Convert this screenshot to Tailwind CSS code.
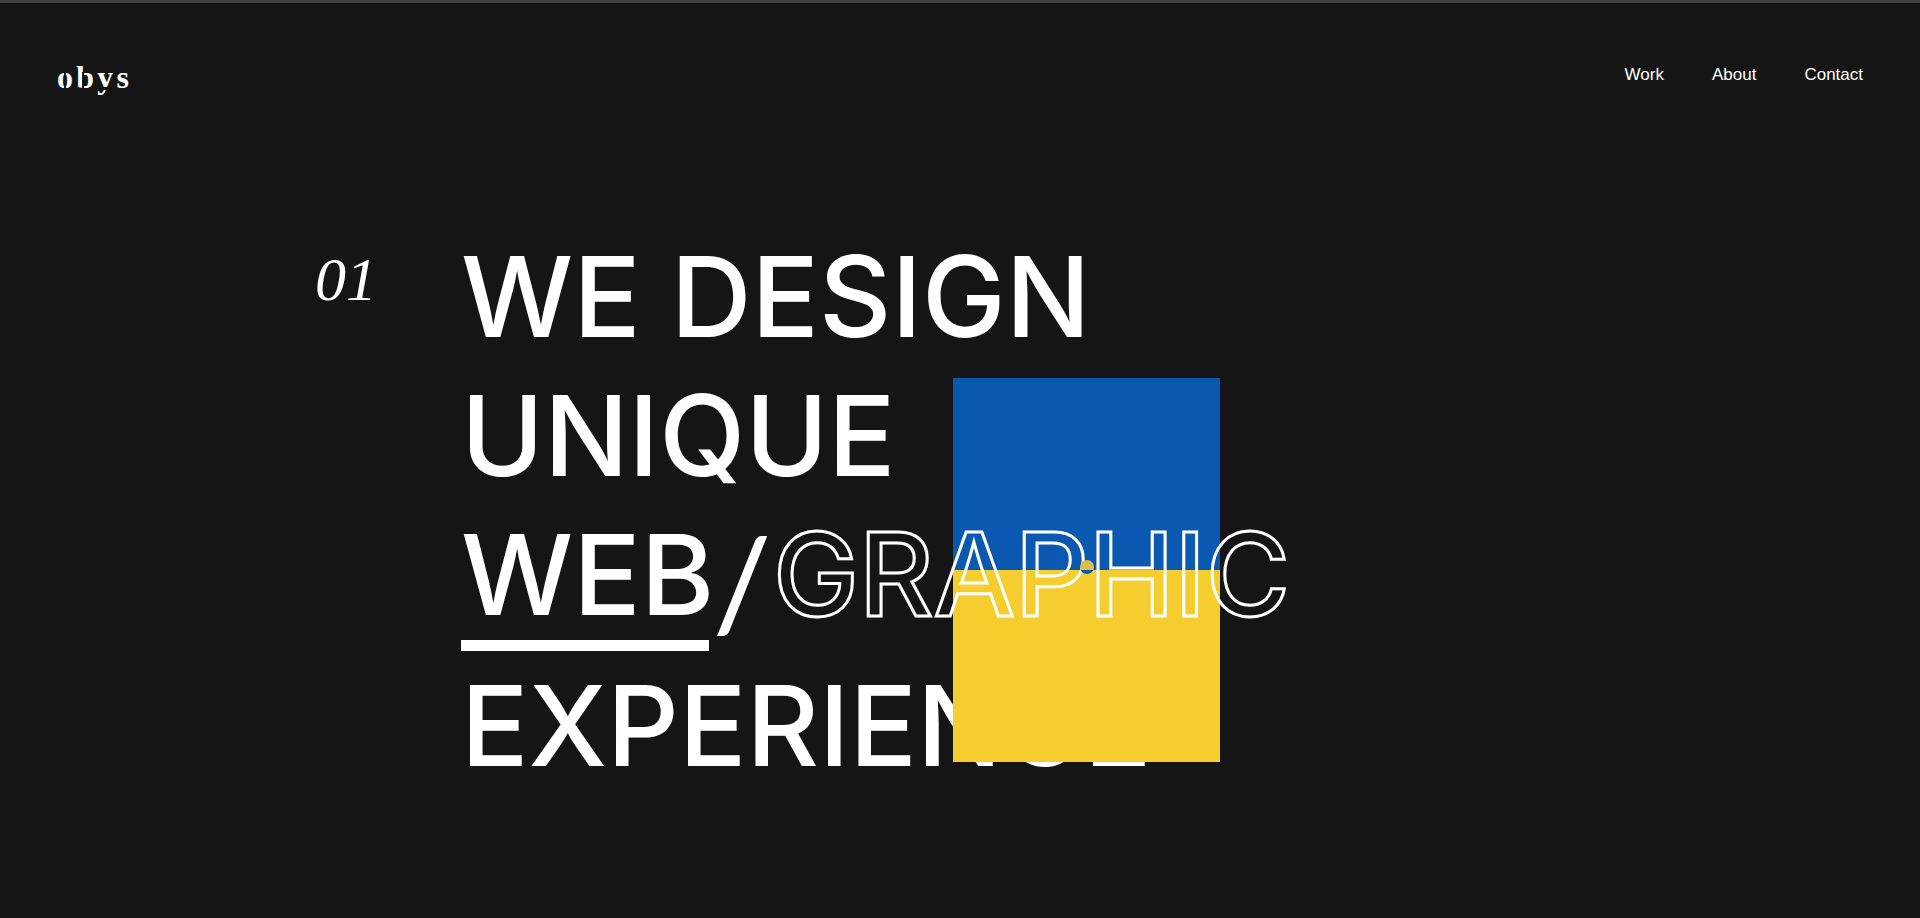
<!DOCTYPE html>
<html lang="en">
<head>
<meta charset="utf-8">
<meta name="viewport" content="width=device-width, initial-scale=1">
<title>Obys</title>
<script src="https://cdn.jsdelivr.net/npm/@tailwindcss/browser@4"></script>
</head>
<body class="min-h-screen overflow-x-hidden border-t-[3px] border-[#404040] bg-[#151515] font-['Inter',sans-serif] text-white">
  <header class="flex items-start justify-between px-[57px] pt-14">
    <a href="#" class="relative block font-['Liberation_Serif',serif] text-[32px] leading-9 font-bold tracking-widest">
      obys
      <!-- slits that give the wordmark its stencil cut -->
      <span class="absolute top-[13px] left-[7px] h-[18px] w-[2px] bg-[#151515]"></span>
      <span class="absolute top-[13px] left-[25px] h-[18px] w-[2px] bg-[#151515]"></span>
      <span class="absolute top-[28px] left-[38px] h-[3px] w-[17px] bg-[#151515]"></span>
    </a>
    <nav class="flex gap-12 pt-1 font-['Liberation_Sans',sans-serif] text-[17px] leading-6">
      <a href="#work">Work</a>
      <a href="#about">About</a>
      <a href="#contact">Contact</a>
    </nav>
  </header>

  <main class="flex items-start pt-[132px] pl-[315px]">
    <p class="w-[146px] shrink-0 pt-4 font-['Liberation_Serif',serif] text-[62px] leading-[72px] italic">01</p>

    <div class="relative">
      <h1 class="text-[112px] leading-[139px] font-medium whitespace-nowrap">
        <span class="block">WE DESIGN</span>
        <span class="block">UNIQUE</span>
        <span class="flex h-[151px] items-start">
          <a href="#web" class="block h-[146px] w-[248px] border-b-[11px] border-white">WEB</a>
          <span class="ml-1 block w-[56px] font-['Lato',sans-serif] text-[128px] leading-[151px] font-medium">/</span>
          <a href="#graphic" class="relative z-20 ml-1 block text-[115px] text-transparent [-webkit-text-stroke:3px_white]">GRAPHIC</a>
        </span>
        <span class="block">EXPERIENCE</span>
      </h1>

      <!-- flag card lies over the headline, below the outlined word -->
      <div class="absolute top-[151px] left-[492px] z-10 flex h-[384px] w-[267px] flex-col">
        <div class="flex-1 bg-[#0b58b0]"></div>
        <div class="flex-1 bg-[#f6cd2f]"></div>
      </div>

      <!-- round cursor, colours inverted against the flag -->
      <div class="absolute top-[333px] left-[619px] z-30 flex size-[14px] flex-col overflow-hidden rounded-full">
        <div class="h-[10px] bg-[#e0bd45]"></div>
        <div class="flex-1 bg-[#0b58b0]"></div>
      </div>
    </div>
  </main>
</body>
</html>
